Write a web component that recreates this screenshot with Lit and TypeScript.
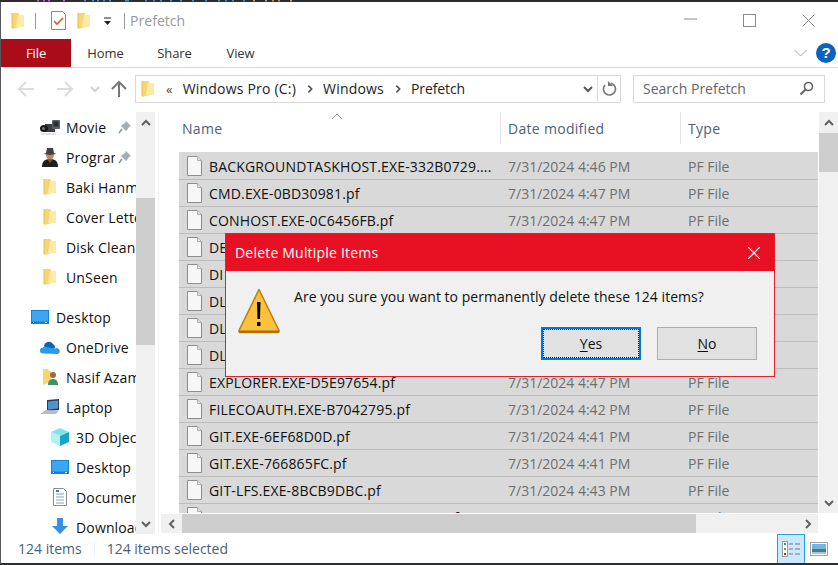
import { LitElement, html, css, svg } from 'lit';
import { customElement } from 'lit/decorators.js';

const folder = () => html`<svg class="ico" width="14" height="18" viewBox="0 0 14 18">
  <path d="M1 1h6l2 2v12l-8 2z" fill="#f6d673"/><path d="M7 3h6v12H5z" fill="#fdeaa9"/><path d="M1 1v15" stroke="#e6bd55"/>
</svg>`;

const chevron = (dir: 'up' | 'down' | 'left' | 'right', color = '#606060', size = 12) => {
  const d = { up: 'M2 8l4-4 4 4', down: 'M2 4l4 4 4-4', left: 'M8 2L4 6l4 4', right: 'M4 2l4 4-4 4' }[dir];
  return html`<svg width=${size} height=${size} viewBox="0 0 12 12"><path d=${d} fill="none" stroke=${color} stroke-width="2"/></svg>`;
};

const arrow = (d: string, color: string) => html`<svg width="18" height="18" viewBox="0 0 18 18"><path d=${d} fill="none" stroke=${color} stroke-width="2"/></svg>`;

const screen = () => html`<svg width="18" height="14" viewBox="0 0 18 14"><rect width="18" height="14" fill="#0a85d9"/><rect x="1" y="1" width="16" height="10.5" fill="#3ea5f2"/><path d="M2 12.500h1M14 12.500h2" stroke="#fff"/></svg>`;

const pin = () => html`<svg class="pin" width="14" height="14" viewBox="0 0 14 14"><path d="M8 1l5 5-2 1-2 3-1 1-5-5 1-1 3-2z" fill="#a4adb5"/><path d="M4 9l-3 4" stroke="#8b959e" stroke-width="1.500"/></svg>`;

const navIcons: Record<string, () => unknown> = {
  folder,
  screen,
  camera: () => html`<svg width="20" height="15" viewBox="0 0 20 15"><path d="M5 4h10v8H5z" fill="#3a3d41"/><rect x="12" y="0" width="8" height="9" rx="1" fill="#5b5f64"/><rect x="13.500" y="1.500" width="5" height="5" fill="#2c2e31"/><ellipse cx="4" cy="8.500" rx="4" ry="3.500" fill="#17181a"/><ellipse cx="3.500" cy="8.500" rx="1.500" ry="1.500" fill="#6d7075"/><path d="M1 14h15" stroke="#c9c9c9"/></svg>`,
  spy: () => html`<svg width="16" height="20" viewBox="0 0 16 20"><path d="M0 20c0-6 3-8 8-8s8 2 8 8z" fill="#1d1f23"/><path d="M5 12h6l-3 4z" fill="#7b5a3c"/><circle cx="8" cy="8.500" r="3.800" fill="#b98a64"/><path d="M1.500 7l2.500-1 1-5h6l1 5 2.500 1-6.500 1z" fill="#3f4145"/></svg>`,
  cloud: () => html`<svg width="20" height="13" viewBox="0 0 20 13"><path d="M4 5a5 5 0 0 1 9-2 4 4 0 0 1 2 4L8 10z" fill="#0a64b8"/><path d="M3 12.500a3 3 0 0 1 0-6l1-1 11 2a3 3 0 0 1 3 5.500z" fill="#2a9be8"/></svg>`,
  user: () => html`<svg width="17" height="18" viewBox="0 0 17 18"><path d="M1 1h5l1 2h2v11l-8 3z" fill="#f6d673"/><circle cx="11" cy="7" r="3" fill="#9a6a4c"/><path d="M6 17c0-4 2-6 5-6s5 2 5 6z" fill="#3f9068"/></svg>`,
  laptop: () => html`<svg width="20" height="16" viewBox="0 0 20 16"><path d="M7 1l12-1v11l-12 1z" fill="#2c3a4a"/><path d="M8 2.500l10-1v8l-10 1z" fill="#4a93d6"/><path d="M0 15l6-4 13 .5-3 3.500z" fill="#b7bdc4"/></svg>`,
  cube: () => html`<svg width="18" height="18" viewBox="0 0 18 18"><path d="M9 0l9 4-9 4-9-4z" fill="#7fe3ec"/><path d="M0 4l9 4v10l-9-4z" fill="#b3f0f4"/><path d="M18 4l-9 4v10l9-4z" fill="#17a5c6"/></svg>`,
  doc: () => html`<svg width="14" height="18" viewBox="0 0 14 18"><path d="M.5.500h10l3 3v14H.5z" fill="#fff" stroke="#8c8c8c"/><path d="M3 6h8M3 9h8M3 12h8M3 15h8" stroke="#8fa0ad"/><path d="M3 3h3" stroke="#2a7fd0" stroke-width="2"/></svg>`,
  down: () => html`<svg width="18" height="18" viewBox="0 0 18 18"><path d="M6 0h6v8h5l-8 8-8-8h5z" fill="#3a8ee6"/></svg>`,
};

const fileIcon = () => html`<svg class="file-ico" width="15" height="20" viewBox="0 0 15 20">
  <path d="M.5.500h10l4 4v15H.5z" fill="#f7f7f7" stroke="#8e8e8e"/><path d="M10.500.500v4h4" fill="#e4e4e4" stroke="#b0b0b0"/>
</svg>`;

const warning = () => html`<svg width="42" height="47" viewBox="0 0 42 47">
  <path d="M21 1.500L41 42.500a1.500 1.500 0 0 1-1 2H2a1.500 1.500 0 0 1-1-2z" fill="#fdc13e" stroke="#b57d12" stroke-width="1.500" stroke-linejoin="round"/>
  <path d="M1 43.500h40" stroke="#a86e07" stroke-width="2"/>
  <path d="M19 14h3.500l-.5 17h-2.500zM19 34h3.500v4H19z" fill="#000"/>
</svg>`;

// bits of the window behind, showing along the top edge
const specks: [number, string][] = [
  [37, '#b05fc8'], [43, '#b05fc8'], [48, '#b05fc8'], [63, '#b05fc8'],
  ...[84, 92, 97, 103, 109, 125, 127, 145, 153, 160, 170, 180, 192, 205, 218, 225, 232, 243].map((x): [number, string] => [x, '#3f8fd0']),
  [253, '#c79a6a'], [265, '#c79a6a'], [272, '#c98a5a'], [278, '#c98a5a'], [290, '#c79a6a'],
];

const navItems = [
  { icon: 'camera', label: 'Movie', left: 66, pinned: true, gap: false },
  { icon: 'spy', label: 'Programs', left: 66, pinned: true, gap: false },
  { icon: 'folder', label: 'Baki Hanma', left: 66, pinned: false, gap: false },
  { icon: 'folder', label: 'Cover Letter', left: 66, pinned: false, gap: false },
  { icon: 'folder', label: 'Disk Cleanup', left: 66, pinned: false, gap: false },
  { icon: 'folder', label: 'UnSeen', left: 66, pinned: false, gap: false },
  { icon: 'screen', label: 'Desktop', left: 56, pinned: false, gap: true },
  { icon: 'cloud', label: 'OneDrive', left: 66, pinned: false, gap: false },
  { icon: 'user', label: 'Nasif Azam', left: 66, pinned: false, gap: false },
  { icon: 'laptop', label: 'Laptop', left: 66, pinned: false, gap: false },
  { icon: 'cube', label: '3D Objects', left: 76, pinned: false, gap: false },
  { icon: 'screen', label: 'Desktop', left: 76, pinned: false, gap: false },
  { icon: 'doc', label: 'Documents', left: 76, pinned: false, gap: false },
  { icon: 'down', label: 'Downloads', left: 76, pinned: false, gap: false },
];

const files = [
  ['BACKGROUNDTASKHOST.EXE-332B0729....', '7/31/2024 4:46 PM'],
  ['CMD.EXE-0BD30981.pf', '7/31/2024 4:47 PM'],
  ['CONHOST.EXE-0C6456FB.pf', '7/31/2024 4:47 PM'],
  ['DE', ''],
  ['DI', ''],
  ['DL', ''],
  ['DL', ''],
  ['DL', ''],
  ['EXPLORER.EXE-D5E97654.pf', '7/31/2024 4:47 PM'],
  ['FILECOAUTH.EXE-B7042795.pf', '7/31/2024 4:42 PM'],
  ['GIT.EXE-6EF68D0D.pf', '7/31/2024 4:41 PM'],
  ['GIT.EXE-766865FC.pf', '7/31/2024 4:41 PM'],
  ['GIT-LFS.EXE-8BCB9DBC.pf', '7/31/2024 4:43 PM'],
  ['GIT-REMOTE-HTTPS.EXE-5D6A0C55.pf', '7/31/2024 4:41 PM'],
];

@customElement('app-root')
export class AppRoot extends LitElement {
  static styles = css`
    :host {
      display: block;
      width: 838px;
      height: 565px;
      overflow: hidden;
      position: relative;
      font-family: 'Open Sans', 'Noto Sans', sans-serif;
      font-size: 14px;
      color: #1a1a1a;
      background: #fff;
    }
    svg { display: block; flex: none; }

    .strip { width: 838px; height: 2px; }
    .window {
      height: 563px;
      box-sizing: border-box;
      border-left: 1px solid #55585c;
      border-bottom: 2px solid #2b2d30;
      display: flex;
      flex-direction: column;
    }

    .titlebar {
      height: 37px;
      flex: none;
      display: flex;
      align-items: center;
      padding-left: 10px;
    }
    .titlebar .sep { width: 1px; height: 16px; background: #9a9a9a; }
    .titlebar .sep.a { margin: 0 15px 0 10px; }
    .titlebar .sep.b { margin: 0 7px 0 12px; }
    .titlebar .folder2 { margin-left: 11px; }
    .titlebar .qa { margin-left: 12px; }
    .title { color: #999; font-size: 14px; margin-left: -2px; letter-spacing: .05px; }
    .controls { margin-left: auto; display: flex; align-items: center; gap: 46px; padding-right: 23px; }
    .controls .min { margin-bottom: 3px; }

    .ribbon {
      height: 28px;
      flex: none;
      display: flex;
      align-items: center;
      border-bottom: 1px solid #dadada;
      font-size: 13px;
    }
    .tab { width: 69px; text-align: center; color: #333; letter-spacing: -.1px; }
    .tab.file { width: 70px; align-self: stretch; line-height: 28px; background: #a80d19; color: #fff; }
    .tab.view { width: 63px; }
    .ribbon .tail { margin-left: auto; display: flex; align-items: center; gap: 9px; padding-right: 2px; }
    .help {
      width: 20px; height: 20px; border-radius: 50%;
      background: #0b63bf; color: #fff;
      font: bold 15px/20px 'Liberation Sans', sans-serif; text-align: center;
    }

    .navbar {
      height: 44px;
      flex: none;
      display: flex;
      align-items: flex-start;
      box-sizing: border-box;
      padding: 7px 12px 0 16px;
    }
    .navbar .nav-btns { display: flex; align-items: center; height: 28px; width: 118px; flex: none; }
    .spacer-a { width: 21px; }
    .spacer-b { width: 15px; }
    .spacer-c { width: 9px; }
    .address, .search {
      height: 28px;
      box-sizing: border-box;
      border: 1px solid #d9d9d9;
      padding-bottom: 1px;
      display: flex;
      align-items: center;
    }
    .address { width: 486px; flex: none; padding-left: 5px; color: #222; letter-spacing: .2px; }
    .address .crumb { margin-left: 8px; }
    .address .crumb.first { margin-left: 10px; }
    .address .crumb.last { letter-spacing: -.1px; margin-left: 8px; }
    .address .quote { margin-left: 11px; font-size: 13px; color: #444; }
    .address .gt { margin-left: 9px; }
    .address .end { margin-left: auto; display: flex; align-items: center; height: 100%; }
    .address .refresh { border-left: 1px solid #d9d9d9; height: 100%; display: flex; align-items: center; padding: 0 3px 0 4px; margin-left: 3px; }
    .search { width: 192px; margin-left: 12px; padding-left: 9px; padding-right: 10px; color: #666; justify-content: space-between; }

    .body { flex: 1; min-height: 0; display: flex; }
    .sidebar { width: 155px; flex: none; display: flex; overflow: hidden; }
    .tree { width: 135px; flex: none; overflow: hidden; }
    .item { height: 30px; display: flex; align-items: center; white-space: nowrap; color: #111; letter-spacing: .15px; }
    .item.gap { margin-top: 10px; }
    .item .icon-box { width: 24px; flex: none; display: flex; justify-content: center; }
    .item .label { margin-left: 4px; }
    .item.pinned .label { width: 49px; flex: none; overflow: hidden; }
    .pin { margin-left: 3px; }

    .vbar { width: 19px; flex: none; background: #f0f0f0; display: flex; flex-direction: column; align-items: center; }
    .vbar .btn { height: 21px; flex: none; display: flex; align-items: center; justify-content: center; width: 100%; }
    .vbar .thumb { background: #cdcdcd; width: 100%; flex: none; }
    .vbar .rest { flex: 1; }
    .side-thumb-top { height: 65px; flex: none; }
    .side-thumb { height: 147px; }

    .gutter { width: 5px; flex: none; box-sizing: border-box; border-left: 1px solid transparent; }
    .gutter::after { content: ''; display: block; width: 1px; height: 100%; margin-left: 1px; background: #f2f2f2; }
    .main { flex: 1; min-width: 0; display: flex; flex-direction: column; }
    .main-top { flex: 1; min-height: 0; display: flex; }
    .list { flex: 1; min-width: 0; overflow: hidden; position: relative; }
    .header {
      height: 40px;
      display: grid;
      grid-template-columns: 339px 180px 1fr;
      color: #4c607a;
      letter-spacing: .3px;
    }
    .header .col { height: 32px; line-height: 34px; padding-left: 21px; box-sizing: border-box; }
    .header .col + .col { border-left: 1px solid #e5e5e5; padding-left: 7px; }
    .sort { position: absolute; left: 170px; top: 1px; }
    .rows { margin-left: 18px; border-top: 1px solid #d9d9d9; }
    .row {
      height: 27px;
      box-sizing: border-box;
      background: #d9d9d9;
      border-bottom: 1px solid #bdbdbd;
      display: grid;
      grid-template-columns: 321px 180px 1fr;
      align-items: center;
      white-space: nowrap;
    }
    .row .name { display: flex; align-items: center; color: #111; padding-left: 8px; letter-spacing: .16px; }
    .file-ico { margin-right: 7px; }
    .row .date, .row .type { color: #6e6e6e; padding-left: 8px; }
    .rbar { width: 19px; margin-left: 1px; }
    .rbar .thumb { height: 39px; }

    .hbar { height: 19px; flex: none; margin: 1px 20px 1px 0; background: #f0f0f0; display: flex; align-items: center; }
    .hbar .btn { width: 21px; height: 100%; flex: none; display: flex; align-items: center; justify-content: center; }
    .hbar .thumb { width: 514px; height: 100%; background: #cdcdcd; flex: none; }
    .hbar .btn.end { margin-left: auto; }

    .status {
      height: 29px;
      flex: none;
      display: flex;
      align-items: center;
      color: #4c607a;
      padding-left: 17px;
    }
    .status .div { width: 1px; height: 15px; background: #f0f0f0; margin: 0 12px; }
    .views { margin-left: auto; display: flex; align-items: center; padding-right: 10px; align-self: stretch; }
    .view-btn { width: 28px; box-sizing: border-box; align-self: stretch; display: flex; align-items: center; justify-content: center; background: #cce8ff; border: 1px solid #26a0da; border-bottom: none; }
    .view-img { margin-left: 5px; }

    .dialog {
      position: absolute;
      left: 225px;
      top: 233px;
      width: 550px;
      height: 144px;
      box-sizing: border-box;
      border: 1px solid #e0222f;
      background: #f0f0f0;
      display: flex;
      flex-direction: column;
    }
    .dlg-title {
      height: 37px;
      flex: none;
      background: #e81123;
      color: #fff;
      display: flex;
      align-items: center;
      justify-content: space-between;
      padding: 0 14px 0 9px;
      letter-spacing: .2px;
    }
    .dlg-body { display: flex; padding: 17px 0 0 12px; color: #111; }
    .dlg-msg { margin: -1px 0 0 14px; line-height: 20px; letter-spacing: .04px; white-space: nowrap; }
    .dlg-actions { display: flex; justify-content: flex-end; gap: 16px; padding-right: 17px; margin-top: -8px; }
    .dlg-btn {
      width: 100px;
      height: 33px;
      box-sizing: border-box;
      border: 1px solid #adadad;
      background: #e1e1e1;
      font: inherit;
      color: #111;
      padding: 0;
    }
    .dlg-btn.default { border: 2px solid #0078d7; outline: 1px dotted #111; outline-offset: -3px; }
    .dlg-btn u { text-underline-offset: 2px; }
  `;

  private renderDialog() {
    return html`<div class="dialog">
      <div class="dlg-title">
        <span>Delete Multiple Items</span>
        <svg width="12" height="12" viewBox="0 0 12 12"><path d="M0 0l12 12M12 0L0 12" stroke="#fff" stroke-width="1.200"/></svg>
      </div>
      <div class="dlg-body">
        ${warning()}
        <div class="dlg-msg">Are you sure you want to permanently delete these 124 items?</div>
      </div>
      <div class="dlg-actions">
        <button class="dlg-btn default"><u>Y</u>es</button>
        <button class="dlg-btn"><u>N</u>o</button>
      </div>
    </div>`;
  }

  render() {
    return html`<svg class="strip" width="838" height="2" viewBox="0 0 838 2">
      <rect width="838" height="2" fill="#2b2d30"/>
      ${specks.map(([x, c]) => svg`<rect x=${x} y="0" width="2" height="1.500" fill=${c}/>`)}
    </svg>
    <div class="window">
      <div class="titlebar">
        <span>${folder()}</span>
        <span class="sep a"></span>
        <svg width="15" height="19" viewBox="0 0 15 19"><path d="M.5.500h11l3 3v15H.5z" fill="#fff" stroke="#8a8a8a"/><path d="M3 10l3 3 6-6" fill="none" stroke="#e2571c" stroke-width="1.600"/></svg>
        <span class="folder2">${folder()}</span>
        <svg class="qa" width="9" height="8" viewBox="0 0 9 8"><path d="M1 1h7" stroke="#222"/><path d="M1 4h7L4.500 8z" fill="#222"/></svg>
        <span class="sep b"></span>
        <span class="title">Prefetch</span>
        <div class="controls">
          <svg class="min" width="13" height="2" viewBox="0 0 13 2"><path d="M0 1h13" stroke="#8a8a8a"/></svg>
          <svg width="13" height="13" viewBox="0 0 13 13"><rect x=".5" y=".5" width="12" height="12" fill="none" stroke="#8a8a8a"/></svg>
          <svg width="13" height="13" viewBox="0 0 13 13"><path d="M.5.500l12 12M12.500.500l-12 12" stroke="#8a8a8a"/></svg>
        </div>
      </div>

      <div class="ribbon">
        <div class="tab file">File</div>
        <div class="tab">Home</div>
        <div class="tab">Share</div>
        <div class="tab view">View</div>
        <div class="tail">
          <svg width="13" height="8" viewBox="0 0 13 8"><path d="M.5 1l6 6 6-6" fill="none" stroke="#a8a8a8"/></svg>
          <div class="help">?</div>
        </div>
      </div>

      <div class="navbar">
        <div class="nav-btns">
          ${arrow('M17 9H2M9 2L2 9l7 7', '#dcdcdc')}
          <span class="spacer-a"></span>
          ${arrow('M1 9h15M9 2l7 7-7 7', '#dcdcdc')}
          <span class="spacer-b"></span>
          ${chevron('down', '#d0d0d0', 12)}
          <span class="spacer-c"></span>
          ${arrow('M9 17V2M2 9l7-7 7 7', '#777')}
        </div>
        <div class="address">
          ${folder()}
          <span class="quote">«</span>
          <span class="crumb first">Windows Pro (C:)</span>
          <span class="gt">${chevron('right', '#555', 10)}</span>
          <span class="crumb">Windows</span>
          <span class="gt">${chevron('right', '#555', 10)}</span>
          <span class="crumb last">Prefetch</span>
          <div class="end">
            ${chevron('down', '#555', 12)}
            <div class="refresh">
              <svg width="15" height="15" viewBox="0 0 15 15"><path d="M9 2.200A6 6 0 1 1 3 4" fill="none" stroke="#777" stroke-width="1.600"/><path d="M6 0v5H11z" fill="#777"/></svg>
            </div>
          </div>
        </div>
        <div class="search">
          <span>Search Prefetch</span>
          <svg width="15" height="15" viewBox="0 0 15 15"><circle cx="9.500" cy="5.500" r="4" fill="none" stroke="#666" stroke-width="1.600"/><path d="M6.500 8.500L1.500 13.500" stroke="#666" stroke-width="2.200"/></svg>
        </div>
      </div>

      <div class="body">
        <div class="sidebar">
          <div class="tree">
            ${navItems.map(it => html`<div class="item ${it.gap ? 'gap' : ''} ${it.pinned ? 'pinned' : ''}" style="padding-left:${it.left - 29}px">
              <span class="icon-box">${navIcons[it.icon]()}</span>
              <span class="label">${it.label}</span>
              ${it.pinned ? pin() : ''}
            </div>`)}
          </div>
          <div class="vbar">
            <div class="btn">${chevron('up')}</div>
            <div class="side-thumb-top"></div>
            <div class="thumb side-thumb"></div>
            <div class="rest"></div>
            <div class="btn">${chevron('down')}</div>
          </div>
        </div>
        <div class="gutter"></div>
        <div class="main">
          <div class="main-top">
            <div class="list">
              <svg class="sort" width="12" height="7" viewBox="0 0 12 7"><path d="M1 6l5-5 5 5" fill="none" stroke="#9a9a9a"/></svg>
              <div class="header">
                <div class="col">Name</div>
                <div class="col">Date modified</div>
                <div class="col">Type</div>
              </div>
              <div class="rows">
                ${files.map(([name, date]) => html`<div class="row">
                  <div class="name">${fileIcon()}${name}</div>
                  <div class="date">${date}</div>
                  <div class="type">PF File</div>
                </div>`)}
              </div>
            </div>
            <div class="vbar rbar">
              <div class="btn">${chevron('up')}</div>
              <div class="thumb"></div>
              <div class="rest"></div>
              <div class="btn">${chevron('down')}</div>
            </div>
          </div>
          <div class="hbar">
            <div class="btn">${chevron('left')}</div>
            <div class="thumb"></div>
            <div class="btn end">${chevron('right')}</div>
          </div>
        </div>
      </div>

      <div class="status">
        <span>124 items</span>
        <span class="div"></span>
        <span>124 items selected</span>
        <div class="views">
          <div class="view-btn">
            <svg width="19" height="16" viewBox="0 0 19 16">
              <rect x=".5" y=".5" width="5" height="15" fill="#fff" stroke="#9a9a9a"/>
              <path d="M2 3h2" stroke="#3c8fa8" stroke-width="2"/><path d="M2 8h2" stroke="#a88a2c" stroke-width="2"/><path d="M2 13h2" stroke="#b03020" stroke-width="2"/>
              <path d="M7 3h4M13 3h5M7 8h4M13 8h5M7 13h4M13 13h5" stroke="#777"/>
            </svg>
          </div>
          <svg class="view-img" width="18" height="14" viewBox="0 0 18 14">
            <rect x=".5" y=".5" width="17" height="13" fill="#fff" stroke="#a0a0a0"/>
            <rect x="2" y="2" width="14" height="5" fill="#6fb3e8"/><rect x="2" y="7" width="14" height="3" fill="#4f7f6a"/><rect x="2" y="10" width="14" height="2" fill="#9ec7e0"/>
          </svg>
        </div>
      </div>
    </div>
    ${this.renderDialog()}`;
  }
}
